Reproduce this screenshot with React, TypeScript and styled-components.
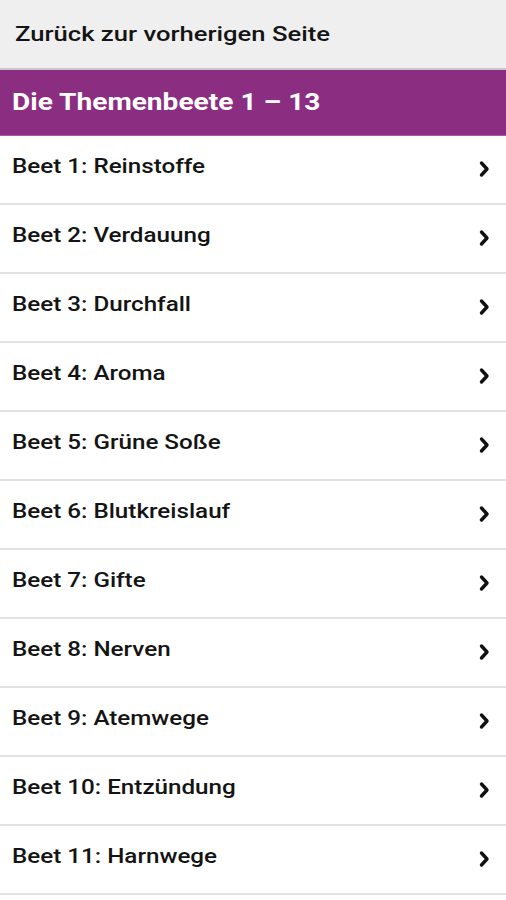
import React from 'react';
import styled, {createGlobalStyle} from 'styled-components';

const GlobalStyle = createGlobalStyle`
  html, body {
    margin: 0;
    padding: 0;
    background: #ffffff;
  }
  body {
    font-family: Roboto, 'Liberation Sans', Arial, sans-serif;
  }
`;

const beete = [
  'Beet 1: Reinstoffe',
  'Beet 2: Verdauung',
  'Beet 3: Durchfall',
  'Beet 4: Aroma',
  'Beet 5: Grüne Soße',
  'Beet 6: Blutkreislauf',
  'Beet 7: Gifte',
  'Beet 8: Nerven',
  'Beet 9: Atemwege',
  'Beet 10: Entzündung',
  'Beet 11: Harnwege',
];

const Chevron: React.FC = () => (
  <svg width="12" height="18" viewBox="0 0 12 18">
    <path
      d="M3.5 3 L9 9 L3.5 15"
      fill="none"
      stroke="#111"
      strokeWidth="3.4"
      strokeLinecap="round"
      strokeLinejoin="round"
    />
  </svg>
);

const App: React.FC = () => {
  return (
    <>
      <GlobalStyle />
      <StyledPage>
        <StyledBackBar>
          <StyledWide $scale={1.22}>Zurück zur vorherigen Seite</StyledWide>
        </StyledBackBar>
        <StyledTitleBar>
          <StyledWide $scale={1.17}>Die Themenbeete 1 – 13</StyledWide>
        </StyledTitleBar>
        <StyledList>
          {beete.map((name) => (
            <StyledRow key={name}>
              <StyledLabel>
                <StyledWide $scale={1.21}>{name}</StyledWide>
              </StyledLabel>
              <StyledArrow>
                <Chevron />
              </StyledArrow>
            </StyledRow>
          ))}
        </StyledList>
      </StyledPage>
    </>
  );
};

const StyledPage = styled.div`
  width: 506px;
  height: 900px;
  overflow: hidden;
  display: flex;
  flex-direction: column;
  background: #ffffff;
`;

// the screenshot's text is stretched sideways
const StyledWide = styled.span<{$scale: number}>`
  display: inline-block;
  white-space: nowrap;
  transform: scaleX(${(props) => props.$scale});
  transform-origin: left center;
`;

const StyledBackBar = styled.div`
  height: 68px;
  flex-shrink: 0;
  display: flex;
  align-items: center;
  padding: 0 15px;
  background: #efefef;
  border-bottom: 2px solid #c9c6c9;
  color: #141414;
  font-size: 21px;
  font-weight: 500;
  box-sizing: content-box;
`;

const StyledTitleBar = styled.div`
  height: 63px;
  flex-shrink: 0;
  display: flex;
  align-items: center;
  padding: 0 12px 2px;
  background: #8b2d80;
  border-bottom: 1px solid #a65c9e;
  color: #ffffff;
  font-size: 24px;
  font-weight: 700;
  box-sizing: content-box;
`;

const StyledList = styled.div`
  display: flex;
  flex-direction: column;
`;

const StyledRow = styled.div`
  height: 67px;
  flex-shrink: 0;
  display: flex;
  align-items: center;
  justify-content: space-between;
  padding: 0 16px 0 12px;
  background: #ffffff;
  border-bottom: 2px solid #e2e2e2;
  box-sizing: content-box;
`;

const StyledLabel = styled.span`
  color: #141414;
  font-size: 20px;
  font-weight: 500;
  margin-bottom: 8px;
`;

const StyledArrow = styled.span`
  display: flex;
  align-items: center;
  margin-bottom: 2px;
`;

export default App;
